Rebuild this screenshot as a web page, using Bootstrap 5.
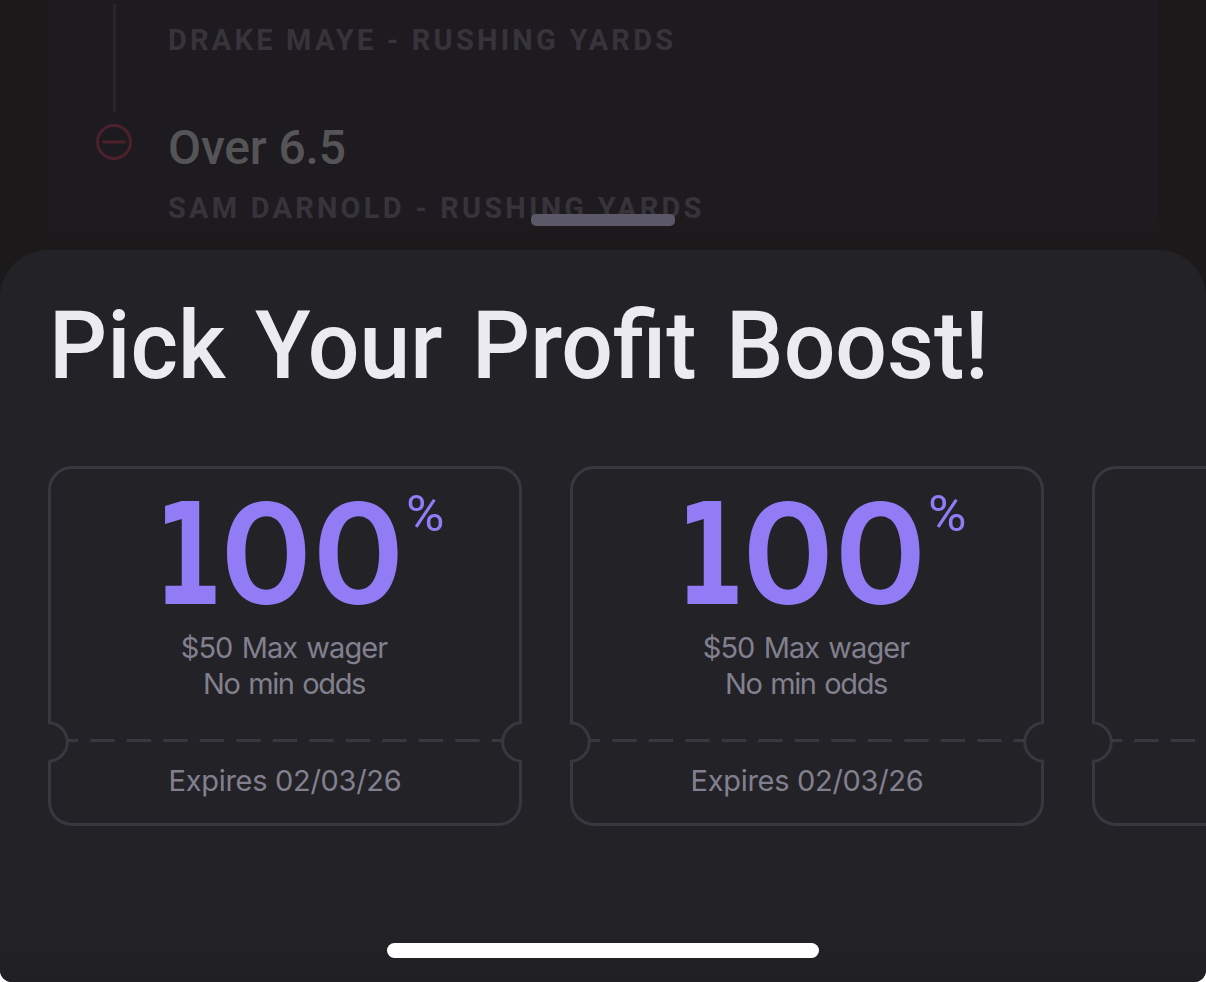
<!DOCTYPE html>
<html lang="en">
<head>
    <meta charset="UTF-8">
    <meta name="viewport" content="width=device-width, initial-scale=1.0">
    <title>Profit Boost</title>
    <link rel="stylesheet" href="https://cdn.jsdelivr.net/npm/bootstrap@5.3.0/dist/css/bootstrap.min.css">
    <style>
        body {
            background-color: #fff;
            font-family: Roboto, "Liberation Sans", sans-serif;
        }
        .screen {
            height: 982px;
            background-color: #1b191a;
            border-radius: 0 0 12px 12px;
        }
        /* dimmed bet slip behind the sheet */
        .slip {
            height: 250px;
            padding: 0 48px;
        }
        .slip-panel {
            padding-left: 48px;
            background: linear-gradient(#1d1b1f 215px, #1b191a 245px);
        }
        .leg {
            gap: 36px;
        }
        .leg-first {
            height: 112px;
        }
        .leg-mark {
            width: 36px;
        }
        .leg-line {
            width: 3px;
            margin-top: 4px;
            background-color: #28262b;
        }
        .leg-icon {
            margin-top: 12px;
        }
        .leg-title {
            margin: 8px 0 14px;
            font-size: 48px;
            line-height: 56px;
            letter-spacing: -.15px;
            color: #555456;
        }
        .leg-sub {
            font-size: 29px;
            line-height: 36px;
            letter-spacing: 3.2px;
            color: #36343a;
        }
        .leg-first .leg-sub {
            margin-top: 22px;
        }
        .grabber {
            bottom: 24px;
            width: 144px;
            height: 12px;
            border-radius: 5px;
            background-color: #5b5968;
        }
        /* bottom sheet */
        .sheet {
            padding: 40px 0 0 48px;
            border-radius: 48px 48px 0 0;
            background: linear-gradient(#232227 680px, #201f23);
        }
        .sheet-title {
            margin: 0 0 64px 1px;
            font-size: 94px;
            line-height: 112px;
            word-spacing: 7px;
            color: #edebf2;
            transform: scaleX(.97);
            transform-origin: left;
        }
        .ticket-row {
            gap: 48px;
        }
        .ticket {
            width: 474px;
            height: 360px;
            padding-top: 32px;
            font-family: Inter, "Liberation Sans", sans-serif;
            font-size: 29px;
            line-height: 36px;
            color: #82808e;
        }
        .ticket-frame {
            fill: none;
            stroke: #39373f;
            stroke-width: 3;
        }
        .boost {
            height: 110px;
            margin-bottom: 22px;
            padding-left: 106px;
            font-size: 140px;
            line-height: 110px;
            font-weight: 600;
            color: #917cf6;
        }
        .boost-one {
            width: 66px;
            font-family: "DejaVu Sans", sans-serif;
            font-weight: 700;
            transform: scaleX(.7);
            transform-origin: left;
        }
        .boost-pct {
            margin: -9px 0 0 1px;
            font: 400 50px/50px Roboto, sans-serif;
            transform: scaleX(1.05);
            transform-origin: left;
        }
        .wager {
            padding-right: 2px;
            letter-spacing: -.95px;
            word-spacing: 2px;
        }
        .odds {
            padding-right: 2px;
            letter-spacing: -1.4px;
            word-spacing: 2px;
        }
        .expires {
            margin-top: 61px;
            letter-spacing: -.3px;
        }
        .home-bar {
            width: 432px;
            height: 15px;
            margin: 0 0 24px -48px;
            border-radius: 8px;
        }
    </style>
</head>
<body>
    <div class="screen d-flex flex-column overflow-hidden">
        <div class="slip position-relative flex-shrink-0">
            <div class="slip-panel h-100">
                <div class="leg leg-first d-flex">
                    <div class="leg-mark d-flex justify-content-center">
                        <div class="leg-line"></div>
                    </div>
                    <div class="leg-sub fw-bold text-nowrap">DRAKE MAYE - RUSHING YARDS</div>
                </div>
                <div class="leg d-flex">
                    <div class="leg-mark">
                        <svg class="leg-icon d-block" width="36" height="36" viewBox="0 0 36 36" fill="none" stroke="#4d212b" stroke-width="3">
                            <circle cx="18" cy="18" r="16.5"/>
                            <path d="M7.5 18h21" stroke-linecap="round"/>
                        </svg>
                    </div>
                    <div>
                        <div class="leg-title fw-medium">Over 6.5</div>
                        <div class="leg-sub fw-bold text-nowrap">SAM DARNOLD - RUSHING YARDS</div>
                    </div>
                </div>
            </div>
            <div class="grabber position-absolute start-50 translate-middle-x"></div>
        </div>

        <div class="sheet flex-grow-1 d-flex flex-column">
            <h1 class="sheet-title fw-medium text-nowrap">Pick Your Profit Boost!</h1>

            <div class="ticket-row d-flex overflow-hidden">
                <div class="ticket position-relative flex-shrink-0 text-center">
                    <svg class="ticket-frame position-absolute top-0 start-0" width="474" height="360">
                        <path id="frame" d="M1.5 258V24A22.5 22.5 0 0 1 24 1.5H450A22.5 22.5 0 0 1 472.5 24V258M472.5 294V336A22.5 22.5 0 0 1 450 358.5H24A22.5 22.5 0 0 1 1.5 336V294M0 256.7A19.3 19.3 0 0 1 0 295.3M474 256.7A19.3 19.3 0 0 0 474 295.3"/>
                        <path id="perforation" d="M20 274.5H454" stroke-dasharray="24.3 12.2" stroke-dashoffset="14.2"/>
                    </svg>
                    <div class="boost d-flex align-items-baseline text-start">
                        <span class="boost-one">1</span><span>00</span><span class="boost-pct align-self-start">%</span>
                    </div>
                    <div class="wager">$50 Max wager</div>
                    <div class="odds">No min odds</div>
                    <div class="expires">Expires 02/03/26</div>
                </div>

                <div class="ticket position-relative flex-shrink-0 text-center">
                    <svg class="ticket-frame position-absolute top-0 start-0" width="474" height="360">
                        <use href="#frame"/>
                        <use href="#perforation"/>
                    </svg>
                    <div class="boost d-flex align-items-baseline text-start">
                        <span class="boost-one">1</span><span>00</span><span class="boost-pct align-self-start">%</span>
                    </div>
                    <div class="wager">$50 Max wager</div>
                    <div class="odds">No min odds</div>
                    <div class="expires">Expires 02/03/26</div>
                </div>

                <!-- next ticket peeks in from the right -->
                <div class="ticket position-relative flex-shrink-0">
                    <svg class="ticket-frame position-absolute top-0 start-0" width="474" height="360">
                        <use href="#frame"/>
                        <use href="#perforation"/>
                    </svg>
                </div>
            </div>

            <div class="home-bar bg-white mt-auto align-self-center"></div>
        </div>
    </div>

    <script src="https://cdn.jsdelivr.net/npm/bootstrap@5.3.0/dist/js/bootstrap.bundle.min.js"></script>
</body>
</html>
